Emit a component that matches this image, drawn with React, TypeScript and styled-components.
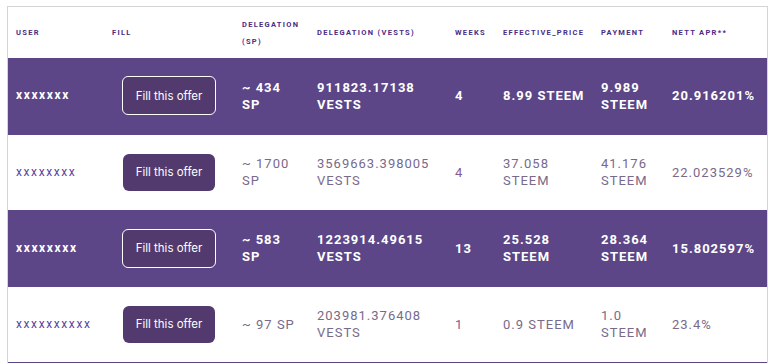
import styled, { createGlobalStyle } from "styled-components";

type Offer = {
  user: string;
  sp: string[];
  vests: string[];
  weeks: string;
  price: string[];
  payment: string[];
  apr: string;
};

const offers: Offer[] = [
  { user: "xxxxxxx", sp: ["~ 434", "SP"], vests: ["911823.17138", "VESTS"], weeks: "4", price: ["8.99 STEEM"], payment: ["9.989", "STEEM"], apr: "20.916201%" },
  { user: "xxxxxxxx", sp: ["~ 1700", "SP"], vests: ["3569663.398005", "VESTS"], weeks: "4", price: ["37.058", "STEEM"], payment: ["41.176", "STEEM"], apr: "22.023529%" },
  { user: "xxxxxxxx", sp: ["~ 583", "SP"], vests: ["1223914.49615", "VESTS"], weeks: "13", price: ["25.528", "STEEM"], payment: ["28.364", "STEEM"], apr: "15.802597%" },
  { user: "xxxxxxxxxx", sp: ["~ 97 SP"], vests: ["203981.376408", "VESTS"], weeks: "1", price: ["0.9 STEEM"], payment: ["1.0", "STEEM"], apr: "23.4%" },
];

const columns = [
  { label: ["USER"], width: 96 },
  { label: ["FILL"], width: 130 },
  { label: ["DELEGATION", "(SP)"], width: 75 },
  { label: ["DELEGATION (VESTS)"], width: 138 },
  { label: ["WEEKS"], width: 48 },
  { label: ["EFFECTIVE_PRICE"], width: 98 },
  { label: ["PAYMENT"], width: 71 },
  { label: ["NETT APR**"], width: 103 },
];

function Lines({ lines }: { lines: string[] }) {
  return (
    <>
      {lines.map((l, i) => (
        <Line key={i}>{l}</Line>
      ))}
    </>
  );
}

export default function App() {
  return (
    <>
      <GlobalStyle />
      <Card>
        <Table>
          <colgroup>
            {columns.map((c, i) => (
              <col key={i} style={{ width: c.width }} />
            ))}
          </colgroup>
          <thead>
            <tr>
              {columns.map((c, i) => (
                <Th key={i}>
                  <Lines lines={c.label} />
                </Th>
              ))}
            </tr>
          </thead>
          <tbody>
            {offers.map((o, i) => {
              const dark = i % 2 === 0;
              return (
                <Row key={i} $dark={dark}>
                  <User $dark={dark}>{o.user}</User>
                  <Td>
                    <FillButton $dark={dark}>Fill this offer</FillButton>
                  </Td>
                  <Td><Lines lines={o.sp} /></Td>
                  <Td><Lines lines={o.vests} /></Td>
                  <Weeks $dark={dark}>{o.weeks}</Weeks>
                  <Td><Lines lines={o.price} /></Td>
                  <Td><Lines lines={o.payment} /></Td>
                  <Td>{o.apr}</Td>
                </Row>
              );
            })}
          </tbody>
        </Table>
      </Card>
    </>
  );
}

const GlobalStyle = createGlobalStyle`
  body {
    margin: 0;
    background: #ffffff;
    font-family: Roboto, "Liberation Sans", sans-serif;
  }
`;

const Card = styled.div`
  margin: 6px 0 0 7px;
  width: 759px;
  border: 1px solid #d4d4d4;
  border-bottom: none;
  background: #ffffff;
`;

const Table = styled.table`
  width: 759px;
  border-collapse: collapse;
  table-layout: fixed;
`;

const Line = styled.span`
  display: block;
`;

const Th = styled.th`
  height: 51px;
  padding: 0 8px;
  text-align: left;
  vertical-align: middle;
  font-size: 7.5px;
  font-weight: 700;
  letter-spacing: 1.3px;
  line-height: 17px;
  color: #4b2c86;
`;

const Row = styled.tr<{ $dark: boolean }>`
  height: 76px;
  background: ${(p) => (p.$dark ? "#5c4687" : "#ffffff")};
  color: ${(p) => (p.$dark ? "#ffffff" : "#786a8a")};
  font-weight: ${(p) => (p.$dark ? 700 : 400)};
  border-bottom: 1px solid #5c4687;
`;

const Td = styled.td`
  padding: 0 8px;
  vertical-align: middle;
  font-size: 13px;
  line-height: 17px;
  letter-spacing: 1px;
`;

const User = styled(Td)<{ $dark: boolean }>`
  font-size: 12px;
  letter-spacing: 1.6px;
  color: ${(p) => (p.$dark ? "#ffffff" : "#5d3fa3")};
`;

const Weeks = styled(Td)<{ $dark: boolean }>`
  color: ${(p) => (p.$dark ? "#ffffff" : "#84598f")};
`;

const FillButton = styled.button<{ $dark: boolean }>`
  display: flex;
  align-items: center;
  justify-content: center;
  margin-left: ${(p) => (p.$dark ? "10px" : "11px")};
  width: ${(p) => (p.$dark ? "94px" : "92px")};
  height: ${(p) => (p.$dark ? "39px" : "37px")};
  padding: 0;
  border: ${(p) => (p.$dark ? "1px solid #ffffff" : "none")};
  border-radius: 6px;
  background: #523a6e;
  color: #ffffff;
  font-family: Inter, "Noto Sans", sans-serif;
  font-size: 11.5px;
  font-weight: 400;
  letter-spacing: 0;
  cursor: pointer;
`;
